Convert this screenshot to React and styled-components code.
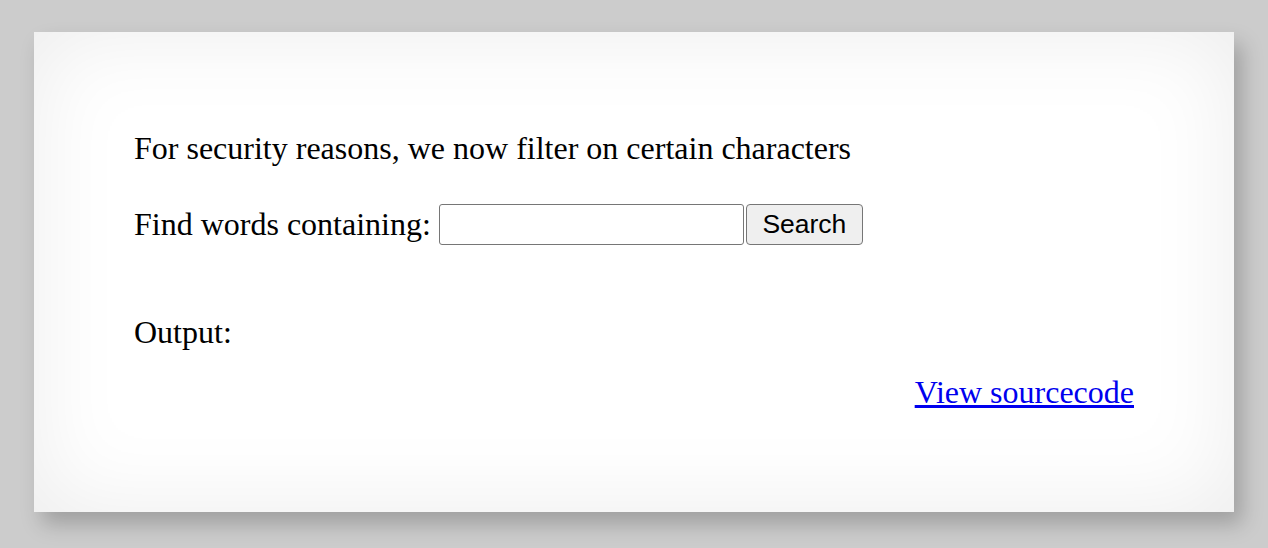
import React from "react";
import styled, { createGlobalStyle } from "styled-components";

const GlobalStyle = createGlobalStyle`
  html, body {
    margin: 0;
    padding: 0;
    background: #cccccc;
  }
  body {
    font-family: "Liberation Serif", "Times New Roman", serif;
  }
`;

const Page = styled.div`
  padding: 32px 34px 36px 34px;
  min-height: 548px;
  box-sizing: border-box;
`;

const Content = styled.div`
  height: 480px;
  box-sizing: border-box;
  background: #ffffff;
  padding: 98px 100px 0 100px;
  box-shadow: inset 0 0 90px rgba(0, 0, 0, 0.08), 8px 12px 20px rgba(0, 0, 0, 0.22);
  font-size: 32px;
  color: #000;
`;

const Line = styled.p`
  margin: ${(p) => p.top || 0}px 0 0 0;
  line-height: 36px;
`;

const Form = styled.form`
  display: flex;
  align-items: center;
  margin: 38px 0 0 0;
`;

const Label = styled.span`
  line-height: 28px;
  margin: 0 8px 1px 0;
`;

const Needle = styled.input`
  width: 305px;
  height: 41px;
  box-sizing: border-box;
  border: 1px solid #767676;
  border-radius: 3px;
  background: #fff;
  padding: 2px 6px;
  font-size: 24px;
`;

const Button = styled.button`
  width: 117px;
  height: 41px;
  margin-left: 2px;
  box-sizing: border-box;
  border: 1px solid #767676;
  border-radius: 4px;
  background: #efefef;
  font-family: "Liberation Sans", Arial, sans-serif;
  font-size: 26.5px;
  color: #000;
  padding: 0;
`;

const Footer = styled.div`
  margin-top: 24px;
  text-align: right;
  line-height: 36px;
`;

const Link = styled.a`
  color: #0000ee;
  text-decoration: underline;
`;

export default function App() {
  return (
    <Page>
      <GlobalStyle />
      <Content>
        <Line>For security reasons, we now filter on certain characters</Line>
        <Form onSubmit={(e) => e.preventDefault()}>
          <Label>Find words containing:</Label>
          <Needle type="text" name="needle" />
          <Button type="submit">Search</Button>
        </Form>
        <Line top={69}>Output:</Line>
        <Footer>
          <Link href="#">View sourcecode</Link>
        </Footer>
      </Content>
    </Page>
  );
}
